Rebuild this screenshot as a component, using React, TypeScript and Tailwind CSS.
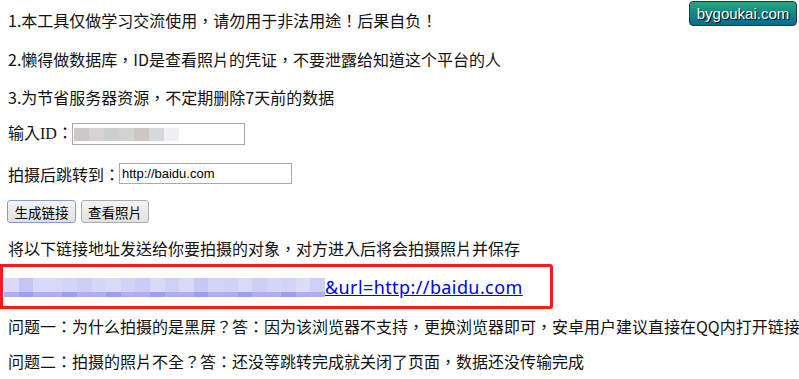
import React from "react"

const cjk = "font-['Microsoft_YaHei','Noto_Sans_CJK_TC',sans-serif]"

const idMosaic = ["#cdc8c8", "#d6d3d2", "#cbcfd0", "#d2d2d0", "#ccc6c4", "#d6d9d9", "#eef0f2"]
const linkMosaic = [
  "#dcd6f7", "#c4c4f5", "#d8d8f7", "#d9d9f7", "#d4d4f6", "#cfcff6", "#d6d6f7",
  "#dadaf7", "#d2d2f6", "#cbcbf5", "#d8d8f7", "#d0d0f6", "#d9d9f7", "#c8c8f5",
  "#d4d4f6", "#d2d2f6", "#dadaf7", "#cfcff6", "#d6d6f7", "#d3d3f6", "#dcdcf8", "#d0d0f6",
]

export default function App() {
  return (
    <div className={`relative w-[799px] h-[379px] overflow-hidden bg-white text-[16px] text-[#111] ${cjk}`}>
      <a className="absolute left-[689px] top-[1px] w-[108px] h-[25px] text-center rounded-[4px] border border-[#333] bg-gradient-to-b from-[#22a87a] to-[#056b90] text-white text-[15px] leading-[23px] font-['Liberation_Sans',sans-serif] [text-shadow:1px_1px_1px_#000]">
        bygoukai.com
      </a>

      <div className="flex flex-col whitespace-nowrap">
        <p className="mt-[9px] h-[22px] leading-[22px] pl-2">1.本工具仅做学习交流使用，请勿用于非法用途！后果自负！</p>
        <p className="mt-[17px] h-[22px] leading-[22px] pl-2">2.懒得做数据库，ID是查看照片的凭证，不要泄露给知道这个平台的人</p>
        <p className="mt-[16px] h-[22px] leading-[22px] pl-2">3.为节省服务器资源，不定期删除7天前的数据</p>

        <div className="mt-[15px] h-[22px] flex items-center pl-2">
          <span className="w-[64px] font-['Liberation_Serif','Noto_Sans_CJK_TC',serif] text-[16px]">输入ID：</span>
          <div className="w-[173px] h-[22px] border border-[#a9a9a9] flex items-center pl-[1px]">
            {idMosaic.map((c, i) => (
              <span key={i} className="w-[15px] h-[13px]" style={{ background: c }} />
            ))}
          </div>
        </div>

        <div className="mt-[18px] h-[21px] flex items-center pl-2">
          <span className="w-[111px] text-[16px]">拍摄后跳转到：</span>
          <input
            readOnly
            value="http://baidu.com"
            className="w-[173px] h-[21px] border border-[#a9a9a9] px-[2px] text-[13px] text-black font-['Liberation_Sans',sans-serif] outline-none"
          />
        </div>

        <div className="mt-[16px] h-[23px] flex items-center gap-[5px] pl-[7px]">
          <button className="w-[69px] h-[23px] rounded-[3px] border border-[#7aa0d4] bg-gradient-to-b from-[#f4f4f4] to-[#e1e1e1] text-[13.5px] leading-[20px] text-black">
            生成链接
          </button>
          <button className="w-[68px] h-[23px] rounded-[3px] border border-[#adadad] bg-gradient-to-b from-[#f4f4f4] to-[#e1e1e1] text-[13.5px] leading-[20px] text-black">
            查看照片
          </button>
        </div>

        <p className="mt-[14px] h-[22px] leading-[22px] pl-2">将以下链接地址发送给你要拍摄的对象，对方进入后将会拍摄照片并保存</p>

        <div className="mt-[5px] h-[45px] w-[553px] border-[3px] border-[#ff1a1a] rounded-tr-[3px] rounded-br-[3px] flex items-center pl-[1px]">
          <div className="flex flex-col w-[321px] h-[19px] mt-[1px]">
            <div className="flex h-[14px]">
              {linkMosaic.map((c, i) => (
                <span key={i} className="flex-1 h-[14px]" style={{ background: c }} />
              ))}
            </div>
            <div className="flex h-[5px]">
              {linkMosaic.map((_, i) => (
                <span key={i} className="flex-1 h-[5px]" style={{ background: i % 3 === 1 ? "#9d9df3" : "#aeaef5" }} />
              ))}
            </div>
          </div>
          <a className="text-[18px] tracking-[0.4px] leading-[22px] text-[#0000ee] underline font-['Noto_Sans',sans-serif]">&amp;url=http://baidu.com</a>
        </div>

        <p className="mt-[6px] h-[22px] leading-[22px] pl-2">问题一：为什么拍摄的是黑屏？答：因为该浏览器不支持，更换浏览器即可，安卓用户建议直接在QQ内打开链接</p>
        <p className="mt-[13px] h-[22px] leading-[22px] pl-2">问题二：拍摄的照片不全？答：还没等跳转完成就关闭了页面，数据还没传输完成</p>
      </div>
    </div>
  )
}
